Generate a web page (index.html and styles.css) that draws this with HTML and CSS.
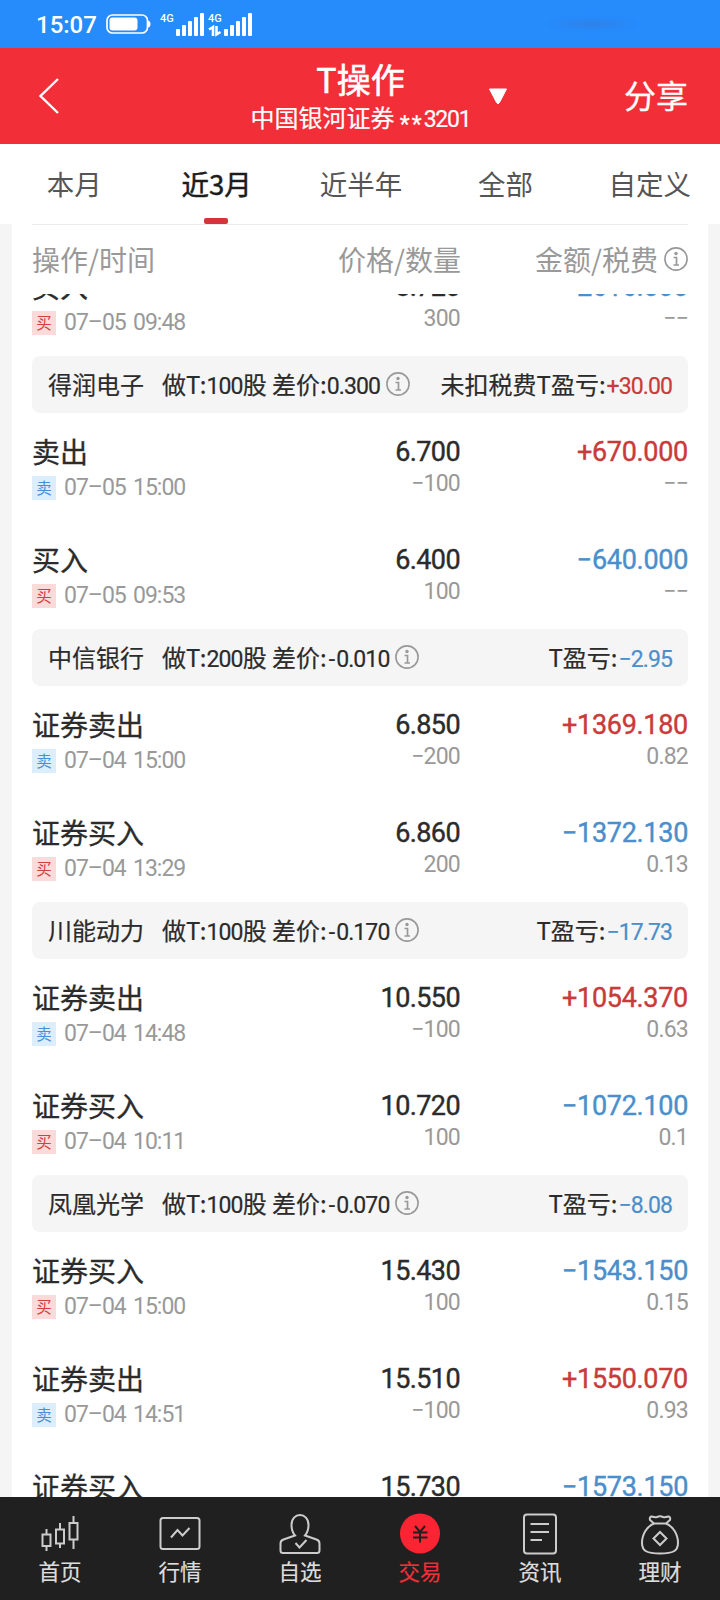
FILE: index.html
```html
<!DOCTYPE html>
<html lang="zh-CN">
<head>
    <meta charset="UTF-8">
    <meta name="viewport" content="width=device-width, initial-scale=1.0">
    <title>T操作</title>
    <link rel="stylesheet" href="styles.css">
</head>
<body>
    <div class="status-bar">
        <span class="time">15:07</span>
        <svg class="battery" width="45" height="20" viewBox="0 0 45 20">
            <rect x="1" y="1" width="40.500" height="18" rx="5.500" fill="none" stroke="#fff" stroke-width="1.700"/>
            <rect x="3.500" y="3.500" width="28" height="13" rx="3" fill="#fff"/>
            <path d="M42 6.500Q44.500 7 44.500 10T42 13.500Z" fill="#fff"/>
        </svg>
        <svg class="signal" width="94" height="26" viewBox="0 0 94 26">
            <text x="0" y="11" class="net">4G</text>
            <text x="48" y="11" class="net">4G</text>
            <g fill="#fff">
                <rect x="16" y="18" width="4" height="7" rx="1"/>
                <rect x="22" y="14" width="4" height="11" rx="1"/>
                <rect x="28" y="10" width="4" height="15" rx="1"/>
                <rect x="34" y="6" width="4" height="19" rx="1"/>
                <rect x="40" y="2" width="4" height="23" rx="1"/>
                <rect x="64" y="18" width="4" height="7" rx="1"/>
                <rect x="70" y="14" width="4" height="11" rx="1"/>
                <rect x="76" y="10" width="4" height="15" rx="1"/>
                <rect x="82" y="6" width="4" height="19" rx="1"/>
                <rect x="88" y="2" width="4" height="23" rx="1"/>
            </g>
            <path d="M49 18.500L53 16V25M56.500 15V23.500L60.500 21" fill="none" stroke="#fff" stroke-width="2.600"/>
        </svg>
        <span class="smudge"></span>
    </div>

    <div class="header">
        <svg class="back" width="22" height="38" viewBox="0 0 22 38">
            <path d="M20 2L2.500 19L20 36" fill="none" stroke="#fff" stroke-width="2.400"/>
        </svg>
        <div class="account">
            <div class="title">T操作</div>
            <div class="broker">中国银河证券 <span class="stars">**</span><span class="acc-no">3201</span></div>
        </div>
        <svg class="arrow" width="20" height="17" viewBox="0 0 20 17">
            <path d="M1.500 1H18.500L11.500 14.500Q10 17 8.500 14.500Z" fill="#fff" stroke="#fff" stroke-linejoin="round"/>
        </svg>
        <div class="share">分享</div>
    </div>

    <div class="tabs">
        <div class="tab">本月</div>
        <div class="tab active">近3月</div>
        <div class="tab">近半年</div>
        <div class="tab">全部</div>
        <div class="tab">自定义</div>
    </div>

    <div class="panel">
        <div class="columns">
            <span>操作/时间</span>
            <span>价格/数量</span>
            <span>金额/税费<svg class="info" viewBox="0 0 24 24"><use href="#info"/></svg></span>
        </div>
        <div class="viewport">
            <div class="list" id="list"></div>
        </div>
    </div>

    <div class="nav">
        <div class="nav-item">
            <svg width="44" height="44" viewBox="0 0 44 44">
                <path d="M4.500 22.500h8v11.500h-8zM8.500 17v5.500M8.500 34v5M18 17.500h8v14h-8zM22 11v6.500M22 31.500V36M31.500 11h8v16.500h-8zM35.500 4v7M35.500 27.500V37"/>
            </svg>
            <span>首页</span>
        </div>
        <div class="nav-item">
            <svg width="44" height="44" viewBox="0 0 44 44">
                <rect x="2.500" y="6" width="39" height="31" rx="2.500"/>
                <path d="M13 25.500L19.500 18L24.500 23.500L31.500 16"/>
            </svg>
            <span>行情</span>
        </div>
        <div class="nav-item">
            <svg width="44" height="44" viewBox="0 0 44 44">
                <path d="M17 23.500C14 20 13.500 17 13.500 13C13.500 6.500 17.500 3 22 3S30.500 6.500 30.500 13C30.500 17 30 20 27 23.500L38.500 27.500Q41.500 28.500 41.500 31.500V38.500Q41.500 41 39 41H5Q2.500 41 2.500 38.500V31.500Q2.500 28.500 5.500 27.500Z"/>
                <path d="M17.500 31L21.500 35.500L28.500 28"/>
            </svg>
            <span>自选</span>
        </div>
        <div class="nav-item current">
            <svg width="44" height="44" viewBox="0 0 44 44">
                <circle cx="22" cy="21.500" r="20"/>
                <path d="M17 14L22 20L27 14M15 20.500H29.500M15 25.500H29.500M22 20V30.500"/>
            </svg>
            <span>交易</span>
        </div>
        <div class="nav-item">
            <svg width="44" height="44" viewBox="0 0 44 44">
                <rect x="6" y="2.500" width="32" height="39" rx="3"/>
                <path d="M12.500 12H31M12.500 20H31M12.500 28H24"/>
            </svg>
            <span>资讯</span>
        </div>
        <div class="nav-item">
            <svg width="44" height="44" viewBox="0 0 44 44">
                <path d="M16 11.500L12 8Q11 4.500 14 4.500Q17 5.500 19 5Q22 3.500 25 5Q27 5.500 30 4.500Q33 4.500 32 8L28 11.500Z"/>
                <path d="M16 11.500C9 14.500 4 22 4 31C4 39 9 41.500 22 41.500S40 39 40 31C40 22 35 14.500 28 11.500"/>
                <path d="M22 20L28.500 26.500L22 33L15.500 26.500Z"/>
            </svg>
            <span>理财</span>
        </div>
    </div>

    <svg width="0" height="0" class="defs">
        <symbol id="info" viewBox="0 0 24 24">
            <circle cx="12" cy="12" r="11.100" fill="none" stroke="currentColor" stroke-width="1.600"/>
            <circle cx="12" cy="6.500" r="1.700" fill="currentColor"/>
            <path d="M9.500 10.500H12.500V18M9.500 18H15" fill="none" stroke="currentColor" stroke-width="1.700"/>
        </symbol>
    </svg>

    <script>
        // 成交记录: [操作, 时间, 价格, 数量, 金额, 税费]
        const groups = [
            { rows: [
                ['买入', '07–05 09:48', '8.720', '300', '−2616.000', '−−']
            ]},
            { name: '得润电子', qty: 100, diff: '0.300', label: '未扣税费T盈亏:', profit: '+30.00', rows: [
                ['卖出', '07–05 15:00', '6.700', '−100', '+670.000', '−−'],
                ['买入', '07–05 09:53', '6.400', '100', '−640.000', '−−']
            ]},
            { name: '中信银行', qty: 200, diff: '-0.010', label: 'T盈亏:', profit: '−2.95', rows: [
                ['证券卖出', '07–04 15:00', '6.850', '−200', '+1369.180', '0.82'],
                ['证券买入', '07–04 13:29', '6.860', '200', '−1372.130', '0.13']
            ]},
            { name: '川能动力', qty: 100, diff: '-0.170', label: 'T盈亏:', profit: '−17.73', rows: [
                ['证券卖出', '07–04 14:48', '10.550', '−100', '+1054.370', '0.63'],
                ['证券买入', '07–04 10:11', '10.720', '100', '−1072.100', '0.1']
            ]},
            { name: '凤凰光学', qty: 100, diff: '-0.070', label: 'T盈亏:', profit: '−8.08', rows: [
                ['证券买入', '07–04 15:00', '15.430', '100', '−1543.150', '0.15'],
                ['证券卖出', '07–04 14:51', '15.510', '−100', '+1550.070', '0.93'],
                ['证券买入', '07–04 09:35', '15.730', '100', '−1573.150', '0.15']
            ]}
        ];

        const sign = value => value[0] === '+' ? 'up' : 'down';

        function groupBar(g) {
            return `<div class="group">
                <span class="stock">${g.name}</span>
                <span>做T:<b>${g.qty}</b>股 差价:<b>${g.diff.replace('-', '<i>-</i>')}</b></span>
                <svg class="info" viewBox="0 0 24 24"><use href="#info"/></svg>
                <span class="profit">${g.label}<b class="${sign(g.profit)}">${g.profit}</b></span>
            </div>`;
        }

        function tradeRow([op, time, price, qty, amount, fee]) {
            const buy = op.includes('买');
            return `<div class="row">
                <div class="op">
                    <div class="op-name">${op}</div>
                    <div class="when"><i class="tag ${buy ? 'buy' : 'sell'}">${buy ? '买' : '卖'}</i><span>${time}</span></div>
                </div>
                <div class="num"><div class="main">${price}</div><div class="sub">${qty}</div></div>
                <div class="num"><div class="main ${sign(amount)}">${amount}</div><div class="sub">${fee}</div></div>
            </div>`;
        }

        document.getElementById('list').innerHTML = groups
            .map(g => (g.name ? groupBar(g) : '') + g.rows.map(tradeRow).join(''))
            .join('');
    </script>
</body>
</html>
```
FILE: styles.css
```css
* {
    box-sizing: border-box;
}

body {
    margin: 0;
    width: 720px;
    height: 1600px;
    display: flex;
    flex-direction: column;
    overflow: hidden;
    background-color: #f5f5f5;
    color: #2b2b2b;
    font-family: "Noto Sans CJK SC", sans-serif;
}

svg {
    display: block;
    flex: none;
}

.defs {
    position: absolute;
}

/* 状态栏 */
.status-bar {
    flex: none;
    height: 48px;
    padding-left: 36px;
    display: flex;
    align-items: center;
    background-color: #268bfb;
    color: #fff;
}

.time {
    width: 70px;
    padding-top: 1px;
    font: 500 24px/48px Roboto, sans-serif;
}

.signal {
    margin-left: 9px;
}

.net {
    font: 500 11px Roboto, sans-serif;
    fill: #fff;
}

.smudge {
    width: 90px;
    height: 10px;
    margin-left: 293px;
    background: radial-gradient(ellipse, rgba(70, 110, 190, 0.45), transparent 70%);
    filter: blur(2px);
}

/* 标题栏 */
.header {
    flex: none;
    height: 96px;
    display: grid;
    grid-template-columns: 249px 223px 16px 20px 1fr;
    grid-template-areas: "back account . arrow share";
    align-items: center;
    background-color: #f22f39;
    color: #fff;
}

.back {
    grid-area: back;
    margin-left: 38px;
}

.account {
    grid-area: account;
    text-align: center;
    white-space: nowrap;
}

.title {
    font-size: 34px;
    line-height: 44px;
    -webkit-text-stroke: 0.6px;
}

.broker {
    font-size: 24px;
    line-height: 32px;
    -webkit-text-stroke: 0.2px;
}

.stars {
    display: inline-block;
    font-family: Roboto, sans-serif;
    font-size: 23px;
    line-height: 20px;
    letter-spacing: 2px;
    vertical-align: -5px;
}

.acc-no {
    font-family: Roboto, sans-serif;
    font-size: 23px;
    letter-spacing: -1.2px;
}

.arrow {
    grid-area: arrow;
}

.share {
    grid-area: share;
    padding: 0 32px 4px 0;
    text-align: right;
    font-size: 32px;
    -webkit-text-stroke: 0.3px;
}

/* 时间范围 */
.tabs {
    flex: none;
    height: 80px;
    display: flex;
    background-color: #fff;
}

.tab {
    flex: 1;
    display: flex;
    flex-direction: column;
    align-items: center;
    padding-left: 4px;
    font-size: 27.5px;
    line-height: 78px;
    color: #555;
}

.tab.active {
    padding-left: 2px;
    color: #1c1c1c;
    -webkit-text-stroke: 0.5px;
}

.tab.active::after {
    content: "";
    width: 24px;
    height: 6px;
    margin: -4px 2px 0 0;
    border-radius: 2px;
    background-color: #d83338;
}

/* 成交列表 */
.panel {
    flex: 1;
    min-height: 0;
    margin: 0 12px;
    padding: 0 20px;
    display: flex;
    flex-direction: column;
    background-color: #fff;
}

.columns {
    flex: none;
    height: 70px;
    display: grid;
    grid-template-columns: 200px 229px 227px;
    border-top: 1px solid #ebebeb;
    font-size: 28px;
    line-height: 67px;
    color: #999;
}

.columns span {
    height: 68px;
    display: flex;
    align-items: center;
    justify-content: flex-end;
}

.columns span:first-child {
    justify-content: flex-start;
}

.info {
    width: 24px;
    height: 24px;
    margin-left: 6px;
    color: #999;
}

.viewport {
    flex: 1;
    min-height: 0;
    overflow: hidden;
}

/* 列表已滚动一段距离 */
.list {
    margin-top: -46px;
}

.group {
    height: 57px;
    padding: 0 16px 2px;
    display: flex;
    align-items: center;
    border-radius: 8px;
    background-color: #f5f5f5;
    font-size: 24px;
    white-space: nowrap;
    -webkit-text-stroke: 0.2px;
}

.group b {
    font-family: Roboto, sans-serif;
    font-size: 23px;
    font-weight: 400;
    letter-spacing: -0.9px;
}

.group i {
    padding: 0 2px;
    font-style: normal;
}

.stock {
    margin-right: 18px;
}

.profit {
    margin-left: auto;
}

.group .profit b {
    margin-left: 1px;
}

.row {
    height: 108px;
    display: grid;
    grid-template-columns: 200px 228px 228px;
}

.op {
    padding-top: 21px;
}

.op-name {
    font-size: 28px;
    line-height: 34px;
    -webkit-text-stroke: 0.3px;
}

.when {
    margin-top: 4px;
    display: flex;
    align-items: center;
    font: 23px/30px Roboto, sans-serif;
    letter-spacing: -1px;
    word-spacing: 2.5px;
    color: #999;
}

.when span {
    padding-top: 1px;
}

.tag {
    width: 24px;
    height: 24px;
    margin-right: 8px;
    text-align: center;
    font: normal 15.5px/22px "Noto Sans CJK SC", sans-serif;
    letter-spacing: 0;
}

.buy {
    background-color: #fadbda;
    color: #d2413f;
}

.sell {
    background-color: #dcedfc;
    color: #4a8fd6;
}

.num {
    padding-top: 22px;
    text-align: right;
    font-family: Roboto, sans-serif;
}

.main {
    font-size: 27px;
    line-height: 34px;
    letter-spacing: -0.6px;
    word-spacing: 0;
    -webkit-text-stroke: 0.4px;
}

.main.up,
.main.down {
    letter-spacing: -0.3px;
}

.sub {
    font-size: 23px;
    line-height: 29px;
    letter-spacing: -0.8px;
    color: #999;
}

.up {
    color: #c93a3a;
}

.down {
    color: #4a8fcb;
}

/* 底部导航 */
.nav {
    flex: none;
    height: 103px;
    display: flex;
    background-color: #202020;
    color: #ddd;
}

.nav-item {
    flex: 1;
    padding-top: 15px;
    display: flex;
    flex-direction: column;
    align-items: center;
    font-size: 21.5px;
    line-height: 30px;
    -webkit-text-stroke: 0.2px;
}

.nav-item svg {
    fill: none;
    stroke: #ccc;
    stroke-width: 2;
}

.current {
    color: #f02f38;
}

.nav-item.current circle {
    fill: #fb2432;
    stroke: none;
}

.nav-item.current path {
    stroke: #202020;
}
```
